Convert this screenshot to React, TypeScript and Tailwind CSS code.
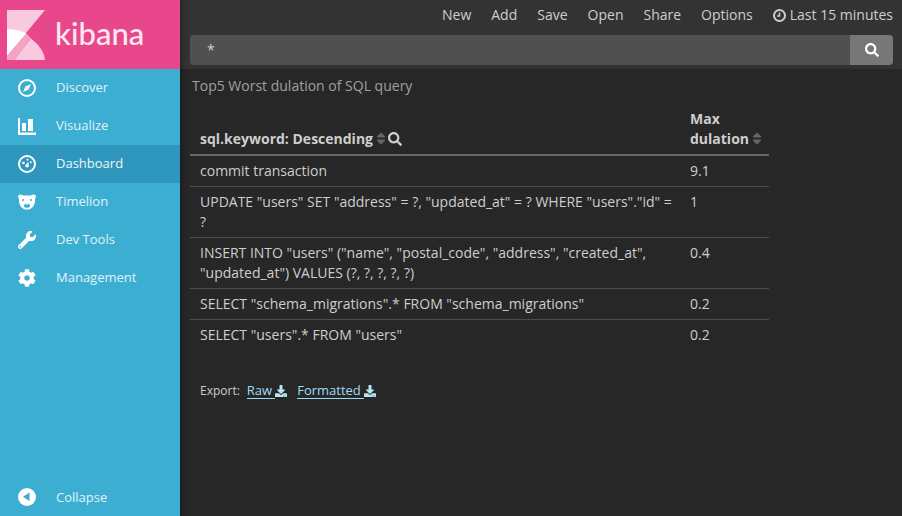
import { FaCog, FaDownload, FaSearch, FaSort, FaWrench } from "react-icons/fa";

const menuItems = [
  { label: "Discover", icon: <CompassIcon /> },
  { label: "Visualize", icon: <BarsIcon /> },
  { label: "Dashboard", icon: <GaugeIcon />, active: true },
  { label: "Timelion", icon: <BearIcon /> },
  { label: "Dev Tools", icon: <FaWrench className="h-[18px] w-[18px]" /> },
  { label: "Management", icon: <FaCog className="h-[18px] w-[18px]" /> },
];

const rows = [
  { sql: 'commit transaction', value: "9.1" },
  { sql: 'UPDATE "users" SET "address" = ?, "updated_at" = ? WHERE "users"."id" = ?', value: "1" },
  { sql: 'INSERT INTO "users" ("name", "postal_code", "address", "created_at", "updated_at") VALUES (?, ?, ?, ?, ?)', value: "0.4" },
  { sql: 'SELECT "schema_migrations".* FROM "schema_migrations"', value: "0.2" },
  { sql: 'SELECT "users".* FROM "users"', value: "0.2" },
];

function CompassIcon() {
  return (
    <svg viewBox="0 0 18 18" className="h-[18px] w-[18px]">
      <circle cx="9" cy="9" r="8" fill="none" stroke="currentColor" strokeWidth="2" />
      <path d="M13 5 L10.500 10.500 L5 13 L7.500 7.500 Z" fill="currentColor" />
    </svg>
  );
}

function BarsIcon() {
  return (
    <svg viewBox="0 0 18 17" className="h-[17px] w-[18px]" fill="currentColor">
      <path d="M0 0h2v14.500h16V17H0z" />
      <path d="M4 5h4v8H4zM10 1h5v12h-5z" />
    </svg>
  );
}

function GaugeIcon() {
  return (
    <svg viewBox="0 0 18 18" className="h-[18px] w-[18px]">
      <circle cx="9" cy="9" r="8" fill="none" stroke="currentColor" strokeWidth="2" />
      <circle cx="5.500" cy="8" r="1.300" fill="currentColor" />
      <path d="M7 10.500 L10.500 7 L10.800 11.500 C10 13 7.500 12.800 7 10.500Z" fill="currentColor" />
      <circle cx="9.500" cy="4.800" r="1" fill="currentColor" />
      <circle cx="12.800" cy="7.200" r="1" fill="currentColor" />
    </svg>
  );
}

function BearIcon() {
  return (
    <svg viewBox="0 0 18 16" className="h-[16px] w-[18px]">
      <path d="M.5 1 Q3 -.3 5 1.500 H13 Q15 -.3 17.500 1 Q18.300 3 17 5 C17.500 11 14 15.500 9 15.500 C4 15.500 .5 11 1 5 Q-.3 3 .5 1Z" fill="currentColor" />
      <circle cx="5" cy="6" r="1" fill="#3caed2" />
      <circle cx="13" cy="6" r="1" fill="#3caed2" />
      <path d="M6 13 C6 7.500 12 7.500 12 13 C10.500 14 7.500 14 6 13Z" fill="#3caed2" />
      <circle cx="9" cy="9.500" r="1.200" fill="currentColor" />
    </svg>
  );
}

function KibanaMark() {
  return (
    <svg viewBox="0 0 38 50" className="h-[50px] w-[38px]">
      <path d="M0 0H38L0 46Z" fill="#f9c9dd" />
      <path d="M24 28.500 C31 34 37 41 38 50 H7Z" fill="#f9c9dd" />
      <path d="M0 19 C7 19 14 20.500 19.500 23.500 L0 46Z" fill="#ffffff" />
      <path d="M0 46 L19.500 23.500 C21 25 23 27 24 28.500 L7 50 H0Z" fill="#f5a2c5" />
    </svg>
  );
}

function SortIcon() {
  return <FaSort className="ml-[3px] inline h-[15px] w-[10px] align-[-2px] text-[#666666]" />;
}

export default function App() {
  return (
    <div className="flex h-[516px] w-[902px] overflow-hidden bg-[#272727] font-['Open_Sans',sans-serif] text-[14px] leading-[20px] text-[#cecece]">
      {/* Sidebar */}
      <div className="z-10 flex w-[180px] flex-none flex-col bg-[#3caed2] shadow-[2px_0_6px_rgba(0,0,0,0.35)]">
        <div className="flex h-[69px] flex-none items-center gap-[10px] bg-[#e8488b] pl-[7px]">
          <KibanaMark />
          <span className="pb-[2px] font-['Lato',sans-serif] text-[31px] font-medium leading-none text-[#fde8f1]">kibana</span>
        </div>
        <nav className="flex flex-col">
          {menuItems.map((item) => (
            <div
              key={item.label}
              className={`flex h-[38px] items-center text-[13px] leading-[18px] ${item.active ? "bg-[#2f97be] text-[#ecf7fa]" : "text-[#e0f3f8]"}`}
            >
              <div className="flex w-[56px] flex-none justify-center pr-[2px] text-white">{item.icon}</div>
              <span className="pb-[2px]">{item.label}</span>
            </div>
          ))}
        </nav>
        <div className="mt-auto flex h-[38px] items-center text-[13px] text-[#e0f3f8]">
          <div className="flex w-[56px] flex-none justify-center pr-[2px] text-white">
            <svg viewBox="0 0 18 18" className="h-[18px] w-[18px]">
              <circle cx="9" cy="9" r="9" fill="currentColor" />
              <path d="M11.500 4.500V13L5 8.750Z" fill="#3caed2" />
            </svg>
          </div>
          <span>Collapse</span>
        </div>
      </div>

      {/* Main */}
      <div className="flex min-w-0 flex-1 flex-col">
        <div className="h-[69px] flex-none bg-[#333333] pl-[10px] pr-[9px]">
          <div className="flex h-[35px] items-center justify-end gap-[20px] pb-[5px] text-[#cecece]">
            <span>New</span>
            <span>Add</span>
            <span>Save</span>
            <span>Open</span>
            <span>Share</span>
            <span>Options</span>
            <span className="flex items-center gap-[4px]">
              <svg viewBox="0 0 13 13" className="h-[13px] w-[13px]" fill="none" stroke="currentColor">
                <circle cx="6.500" cy="6.500" r="5.500" strokeWidth="2" />
                <path d="M6.500 3.500V7H4" strokeWidth="1.500" />
              </svg>
              Last 15 minutes
            </span>
          </div>
          <div className="flex h-[30px] overflow-hidden rounded-[4px] bg-[#505050]">
            <div className="flex-1 pl-[17px] pt-[5px] text-[#cecece]">*</div>
            <div className="flex w-[43px] items-center justify-center bg-[#777777] text-white">
              <FaSearch className="h-[14px] w-[14px]" />
            </div>
          </div>
        </div>

        <div className="px-[10px]">
          <div className="mt-[7px] h-[20px] pl-[2px] text-[#a0a0a0]">Top5 Worst dulation of SQL query</div>
          <table className="mt-[8px] w-[579px] border-collapse">
            <thead>
              <tr className="border-b-2 border-[#666666] align-bottom font-bold">
                <th className="py-[5px] pl-[10px] pr-[6px] text-left font-bold">
                  sql.keyword: Descending
                  <SortIcon />
                  <FaSearch className="ml-[2px] inline h-[14px] w-[14px] align-[-2px]" />
                </th>
                <th className="w-[89px] py-[5px] pl-[10px] pr-0 text-left font-bold">
                  Max dulation
                  <SortIcon />
                </th>
              </tr>
            </thead>
            <tbody>
              {rows.map((row) => (
                <tr key={row.sql + row.value} className="border-b border-[#4d4d4d] align-top last:border-b-0">
                  <td className="py-[5px] pl-[10px] pr-[6px]">{row.sql}</td>
                  <td className="py-[5px] pl-[10px] pr-0">{row.value}</td>
                </tr>
              ))}
            </tbody>
          </table>
          <div className="mt-[33px] flex items-center pl-[10px] text-[12px] leading-[16px]">
            <span>Export:</span>
            <a className="ml-[7px] flex items-center text-[13px] leading-[15px] text-[#9ddcf0]">
              <span className="border-b border-[#9ddcf0] pr-[3px]">Raw</span>
              <FaDownload className="h-[12px] w-[12px] text-[#b9e6f3]" />
            </a>
            <a className="ml-[10px] flex items-center text-[13px] leading-[15px] text-[#9ddcf0]">
              <span className="border-b border-[#9ddcf0] pr-[3px]">Formatted</span>
              <FaDownload className="h-[12px] w-[12px] text-[#b9e6f3]" />
            </a>
          </div>
        </div>
      </div>
    </div>
  );
}
